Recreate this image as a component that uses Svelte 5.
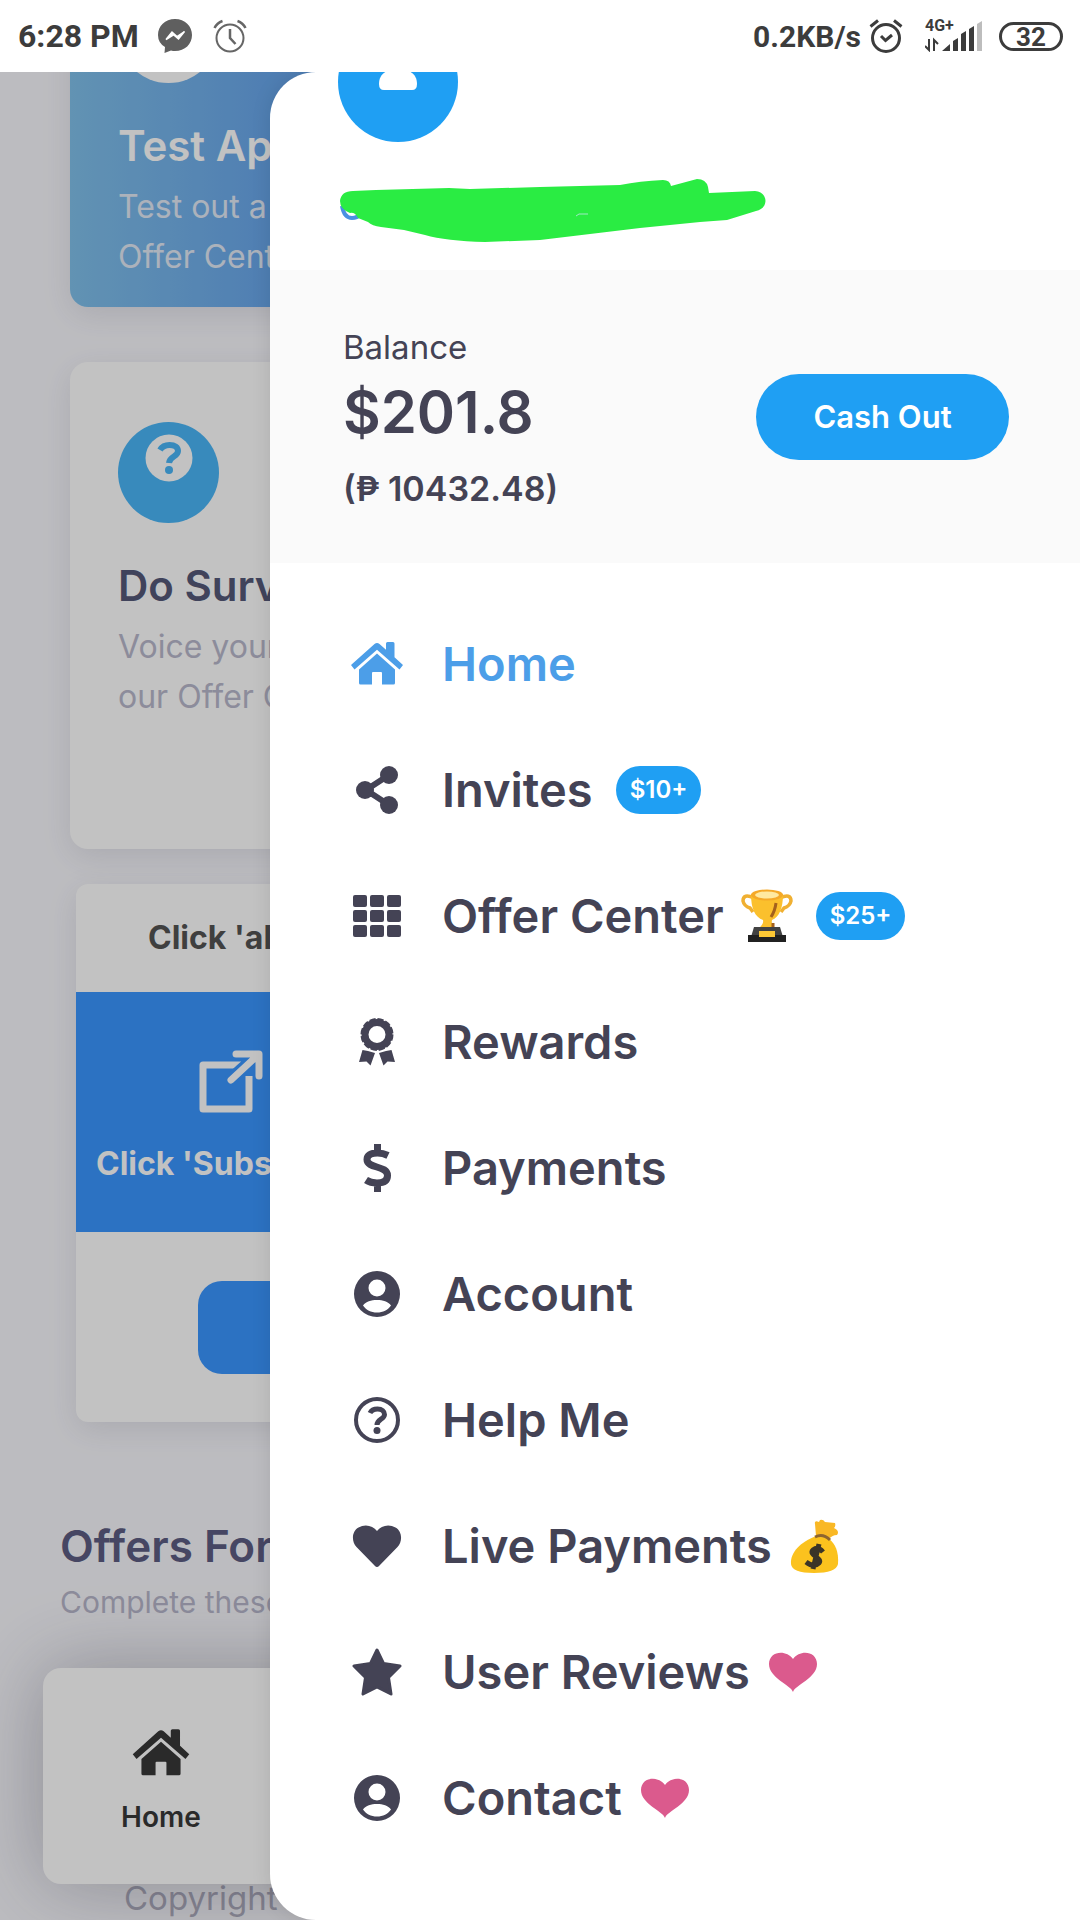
<script>
	let active = 'home';

	// Entries of the side menu, top to bottom
	const menuItems = [
		{ id: 'home', icon: 'home', title: 'Home' },
		{ id: 'invites', icon: 'share', title: 'Invites', badge: '$10+' },
		{ id: 'offers', icon: 'grid', title: 'Offer Center', emoji: 'trophy', badge: '$25+' },
		{ id: 'rewards', icon: 'award', title: 'Rewards' },
		{ id: 'payments', icon: 'dollar', title: 'Payments' },
		{ id: 'account', icon: 'user', title: 'Account' },
		{ id: 'help', icon: 'help', title: 'Help Me' },
		{ id: 'live', icon: 'heart', title: 'Live Payments', emoji: 'moneybag' },
		{ id: 'reviews', icon: 'star', title: 'User Reviews', emoji: 'heart' },
		{ id: 'contact', icon: 'user', title: 'Contact', emoji: 'heart' }
	];
</script>

{#snippet houseShape()}
	<path d="M1 25 24.500 4Q27 2 29.500 4L36 9.800V3.500Q36 2 37.500 2H43Q44.500 2 44.500 3.500V17.300L53 25 49.500 29.500 27 9.800 4.500 29.500Z" />
	<path d="M27 13.500 45 29.500V43Q45 44.500 43.500 44.500H32V33Q32 32 31 32H23Q22 32 22 33V44.500H10.500Q9 44.500 9 43V29.500Z" />
{/snippet}

{#snippet icon(name)}
	<svg class="icon" viewBox="0 0 54 48" fill="currentColor" aria-hidden="true">
		{#if name === 'home'}
			{@render houseShape()}
		{:else if name === 'share'}
			<path d="M39 9 16 24 39 39" fill="none" stroke="currentColor" stroke-width="6" />
			<circle cx="39" cy="9" r="9" />
			<circle cx="15" cy="24" r="9" />
			<circle cx="39" cy="39" r="9" />
		{:else if name === 'grid'}
			{#each [3, 18, 33] as y}
				{#each [3, 20, 37] as x}
					<rect x={x} y={y} width="14" height="12" rx="2" />
				{/each}
			{/each}
		{:else if name === 'award'}
			<circle cx="27" cy="16.500" r="12" fill="none" stroke="currentColor" stroke-width="7" />
			<circle cx="27" cy="16.500" r="15" fill="none" stroke="currentColor" stroke-width="3" stroke-dasharray="6 1.854" />
			<path d="M12.500 32 18 33 25 35 20.500 47.500 16.500 43.500 9 44ZM41.500 32 36 33 29 35 33.500 47.500 37.500 43.500 45 44Z" />
		{:else if name === 'dollar'}
			<path d="M38 11.500Q33 9 27.500 9C20.500 9 17 11.500 17 15.500C17 25 37.500 21 37.500 31.500C37.500 36.500 34 39 27 39Q20.500 39 16 36M27.500 0V9M27.500 39V48" fill="none" stroke="currentColor" stroke-width="7" />
		{:else if name === 'user'}
			<path fill-rule="evenodd" d="M27 1a23 23 0 1 0 0 46a23 23 0 1 0 0-46ZM27 9.500a8.500 8.500 0 1 1 0 17a8.500 8.500 0 1 1 0-17ZM13 35.500C16 31.500 21 30 27 30S38 31.500 41 35.500C38 40 33 42.500 27 42.500S16 40 13 35.500Z" />
		{:else if name === 'help'}
			<circle cx="27" cy="24" r="21" fill="none" stroke="currentColor" stroke-width="4" />
			<path d="M20 17Q22 13 27.500 13C32 13 34.500 15.500 34.500 18.500C34.500 23.500 27 23 27 29" fill="none" stroke="currentColor" stroke-width="5" />
			<circle cx="27" cy="34.500" r="3.500" />
		{:else if name === 'heart'}
			<path d="M27 45Q26 45 24.500 43.500L6.500 25C1 19 2 9 8.500 5.500C15 1.500 23 3.500 27 9C31 3.500 39 1.500 45.500 5.500C52 9 53 19 47.500 25L29.500 43.500Q28 45 27 45Z" />
		{:else if name === 'star'}
			<path d="M27 2 33.500 15.500 50 18 38.500 29.500 41 46 27 39 13 46 15.500 29.500 4 18 20.500 15.500Z" stroke="currentColor" stroke-width="3" stroke-linejoin="round" />
		{/if}
	</svg>
{/snippet}

{#snippet emoji(name)}
	<svg class="emoji" viewBox="0 0 52 54" aria-hidden="true">
		{#if name === 'trophy'}
			<path d="M13 9Q2 4 2 12Q3 17 9 19L12 23M39 9Q50 4 50 12Q49 17 43 19L40 23" fill="none" stroke="#f0b032" stroke-width="3.500" />
			<path d="M10 5C10 20 14 28 22 31Q23 35 18 39H34Q30 36 31 31C38 28 42 20 42 5Z" fill="#fbc02d" />
			<ellipse cx="26" cy="6" rx="16" ry="5.500" fill="#f5a928" />
			<ellipse cx="26" cy="6" rx="12" ry="3.500" fill="#ffe9a0" />
			<path d="M35 14Q34 22 30 28M32 34V38" fill="none" stroke="#a4611c" stroke-width="3" />
			<path d="M13 38H39L42 48H10Z" fill="#424242" />
			<path d="M7 46H45V53H7Z" fill="#212121" />
			<path d="M18 42H34V48H18Z" fill="#fdc835" />
		{:else if name === 'moneybag'}
			<path d="M27 17 26 5Q25 1 30 3L31 1Q34 0 36 3L46 4Q47 7 45 9Q51 12 48 16Q43 16 39 21Z" fill="#f9b825" />
			<path d="M27 17C12 23 1 33 2 45Q3 54 25 54T49 45C50 33 46 24 40 20Z" fill="#fbc21e" />
			<path d="M26 18Q34 14 41 21" fill="none" stroke="#8d6530" stroke-width="3" />
			<path d="M34 33Q29 27 24 31C19 36 34 39 30 44Q25 49 17 43M30 25 24 50" fill="none" stroke="#3b3427" stroke-width="5" />
		{:else}
			<path d="M26 47C24 40 2 33 2 19C2 6 19 4 26 14C33 4 50 6 50 19C50 33 28 40 26 47Z" fill="#db5a8d" />
		{/if}
	</svg>
{/snippet}

<div class="screen">
	<header class="status">
		<span class="clock">6:28 PM</span>
		<svg class="status-icon" viewBox="0 0 34 34" aria-hidden="true">
			<path d="M17 0C7 0 0 7 0 16Q0 24 7 28L6.500 34 13 31.500Q15 32 17 32C27 32 34 25 34 16S27 0 17 0Z" fill="#5f5f5f" />
			<path d="M8 20.500 14 13 19 17.500 26.500 12.500 20.500 20 15.500 15.800Z" fill="#fff" stroke="#fff" stroke-width="1.500" />
		</svg>
		<svg class="status-icon" viewBox="0 0 34 34" fill="none" stroke="#666" stroke-width="2" aria-hidden="true">
			<circle cx="17" cy="19" r="13.500" />
			<path d="M17 10V19L22.500 25M1.500 9Q4 4 9.500 2M32.500 9Q30 4 24.500 2" stroke-width="2.500" />
		</svg>
		<span class="spacer"></span>
		<span class="speed">0.2KB/s</span>
		<svg class="status-icon alarm" viewBox="0 0 34 34" fill="none" stroke="#3c3c3c" stroke-width="3" aria-hidden="true">
			<circle cx="17" cy="19" r="13.500" />
			<path d="M12 17 16.500 21.500 23 16M1.500 7.500 9 1.500M32.500 7.500 25 1.500" />
		</svg>
		<div class="network">
			<span>4G+</span>
			<svg viewBox="0 0 58 32" aria-hidden="true">
				<path d="M4 19V30L0 26M9 31V20L13 24" fill="none" stroke="#3c3c3c" stroke-width="2" />
				<path d="M17 31 25 24V31ZM28 21 33 18V31H28ZM36 14 41 11V31H36ZM44 9 49 6V31H44Z" fill="#3c3c3c" />
				<path d="M52 4 57 1V31H52Z" fill="#bdbdbd" />
			</svg>
		</div>
		<span class="battery">32</span>
	</header>

	<div class="stage">
		<main class="page">
			<section class="card feature">
				<div class="round"></div>
				<h2>Test Apps</h2>
				<p>Test out a new app in<br />Offer Center</p>
			</section>

			<section class="card survey">
				<div class="round">
					<svg viewBox="0 0 48 48" aria-hidden="true">
						<circle cx="24" cy="24" r="23.500" fill="#fff" />
						<path d="M15 16Q18 11 24.500 11C30 11 33 13.500 33 17C33 23 24.500 22 24 29" fill="none" stroke="#4ab6f8" stroke-width="6" />
						<circle cx="24" cy="36" r="4" fill="#4ab6f8" />
					</svg>
				</div>
				<h2>Do Surveys</h2>
				<p>Voice your opinion in<br />our Offer Center</p>
			</section>

			<section class="push">
				<h3>Click 'allow'</h3>
				<div class="push-body">
					<svg viewBox="0 0 66 64" fill="none" stroke="#fff" stroke-width="7" aria-hidden="true">
						<path d="M43 15H5V59H51V26" stroke-linejoin="round" />
						<path d="M31 31 60 5" stroke="#3a96ff" stroke-width="13" />
						<path d="M33 30 60 5M38 4H61V26" stroke-linecap="round" stroke-linejoin="round" />
					</svg>
					<strong>Click 'Subscribe'</strong>
				</div>
				<div class="push-foot">
					<button type="button" aria-label="Subscribe"></button>
				</div>
			</section>

			<section class="offers">
				<h1>Offers For You</h1>
				<p>Complete these offers</p>
			</section>

			<footer class="copyright">Copyright</footer>
		</main>

		<nav class="tabbar">
			<a class="tab" href="#home">
				<svg viewBox="0 0 54 46" fill="currentColor" aria-hidden="true">
					{@render houseShape()}
				</svg>
				<span>Home</span>
			</a>
		</nav>

		<div class="overlay"></div>

		<aside class="drawer">
			<div class="profile">
				<svg class="avatar" viewBox="0 0 120 120" aria-hidden="true">
					<circle cx="60" cy="60" r="60" fill="#1f9ff3" />
					<circle cx="60" cy="30" r="14" fill="#fff" />
					<path d="M41 62C41 51 50 47 60 47S79 51 79 62Q79 68 74 68H46Q41 68 41 62Z" fill="#fff" />
				</svg>
				<svg class="scribble" viewBox="340 178 428 66" aria-hidden="true">
					<path d="M342 206Q344 218 352 218Q357 218 361 214" fill="none" stroke="#4a90e2" stroke-width="4" />
					<path d="M340 201Q341 191 353 191L376 190 449 188 470 189 540 187 620 185Q640 181 663 180Q670 180 671 186L697 179Q706 179 708 187L709 193 755 191Q765 192 765.500 201Q765 209 756 211L727 220 700 222 640 228 540 240 485 242Q446 241 425 235L404 230 381 227Q372 226 368 222L358 218Q355 212 350 213Q340 209 340 201Z" fill="#2aec43" />
					<path d="M576 216 579 214 588 214" fill="none" stroke="#9fe9c5" stroke-width="1" />
				</svg>
			</div>

			<section class="balance">
				<div class="amounts">
					<span class="label">Balance</span>
					<strong>$201.8</strong>
					<span class="local">(₱ 10432.48)</span>
				</div>
				<button type="button" class="cashout">Cash Out</button>
			</section>

			<nav class="menu">
				{#each menuItems as item}
					<a class="menu-item" class:active={active === item.id} href="#{item.id}">
						{@render icon(item.icon)}
						<span>{item.title}</span>
						{#if item.emoji}
							{@render emoji(item.emoji)}
						{/if}
						{#if item.badge}
							<span class="badge">{item.badge}</span>
						{/if}
					</a>
				{/each}
			</nav>
		</aside>
	</div>
</div>

<style>
	:global(body) {
		margin: 0;
		background: #fff;
	}

	.screen {
		display: flex;
		flex-direction: column;
		height: 100vh;
		overflow: hidden;
		font-family: Inter, Roboto, sans-serif;
		color: #444355;
	}

	h1, h2, h3, p {
		margin: 0;
	}

	a {
		color: inherit;
		text-decoration: none;
	}

	button {
		border: 0;
		font-family: inherit;
		cursor: pointer;
	}

	svg {
		display: block;
		flex-shrink: 0;
	}

	/* Status bar */
	.status {
		display: flex;
		align-items: center;
		flex-shrink: 0;
		box-sizing: border-box;
		height: 72px;
		padding: 0 17px 0 18px;
		font-family: Roboto, sans-serif;
		font-weight: 700;
		color: #3c3c3c;
	}

	.clock {
		font-size: 32px;
		margin-right: 19px;
	}

	.status-icon {
		width: 34px;
		height: 34px;
		margin-right: 21px;
	}

	.status-icon.alarm {
		margin: 0 22px 0 8px;
	}

	.spacer {
		flex: 1;
	}

	.speed {
		font-size: 30px;
	}

	.network {
		position: relative;
		width: 58px;
		margin-right: 16px;
	}

	.network svg {
		width: 58px;
		height: 32px;
	}

	.network span {
		position: absolute;
		left: 0;
		top: 0;
		font-size: 16px;
		line-height: 12px;
	}

	.battery {
		box-sizing: border-box;
		width: 64px;
		height: 29px;
		border: 3px solid #3c3c3c;
		border-radius: 15px;
		font-size: 26px;
		line-height: 24px;
		text-align: center;
	}

	/* Page behind the drawer, scrolled to its end */
	.stage {
		position: relative;
		flex: 1;
		min-height: 0;
		overflow: hidden;
		background: #f8f8fd;
	}

	.page {
		display: flex;
		flex-direction: column;
		justify-content: flex-end;
		box-sizing: border-box;
		height: 100%;
		padding: 0 70px 2px;
	}

	.page > * {
		flex-shrink: 0;
	}

	.card {
		padding: 60px 48px 25px;
		border-radius: 18px;
		box-shadow: 0 8px 30px rgba(60, 60, 80, 0.12);
		background: #fff;
	}

	.card h2 {
		margin: 38px 0 11px;
		font-size: 42px;
		font-weight: 600;
		line-height: 50px;
		color: #555878;
	}

	.card p {
		font-size: 32px;
		line-height: 50px;
		color: #b9b8cc;
	}

	.round {
		display: flex;
		justify-content: center;
		box-sizing: border-box;
		width: 101px;
		height: 101px;
		padding-top: 12px;
		border-radius: 50%;
		background: #4ab6f8;
	}

	.round svg {
		width: 48px;
		height: 48px;
	}

	.feature {
		background: linear-gradient(90deg, #81c1ec, #68a6ec 22%, #5f9cf0);
	}

	.feature .round {
		background: #fff;
	}

	.feature h2 {
		color: #fff;
	}

	.feature p {
		color: #e2eaf6;
	}

	.survey {
		margin-top: 55px;
		padding-bottom: 127px;
	}

	.push {
		margin: 35px 6px 0;
		border-radius: 12px;
		background: #fff;
		box-shadow: 0 8px 30px rgba(60, 60, 80, 0.12);
	}

	.push h3 {
		padding: 0 72px;
		font-size: 32px;
		font-weight: 700;
		line-height: 108px;
		color: #545454;
	}

	.push-body {
		box-sizing: border-box;
		height: 240px;
		padding: 58px 20px 0;
		background: #3a96ff;
	}

	.push-body svg {
		width: 66px;
		height: 64px;
		margin: 0 0 32px 102px;
	}

	.push-body strong {
		font-size: 32px;
		line-height: 36px;
		color: #fff;
	}

	.push-foot {
		padding: 49px 122px 48px;
	}

	.push-foot button {
		display: block;
		width: 100%;
		height: 93px;
		border-radius: 24px;
		background: #3a96ff;
	}

	.offers {
		margin: 99px -10px 256px;
	}

	.offers h1 {
		margin-bottom: 11px;
		font-size: 44px;
		font-weight: 600;
		line-height: 50px;
		color: #5d5d82;
	}

	.offers p {
		font-size: 30px;
		line-height: 40px;
		color: #b9b8cc;
	}

	.copyright {
		padding-left: 54px;
		font-size: 33px;
		line-height: 40px;
		color: #b0afc0;
	}

	.tabbar {
		position: absolute;
		left: 43px;
		right: 43px;
		bottom: 36px;
		display: flex;
		box-sizing: border-box;
		height: 216px;
		padding: 59px 78px 0;
		border-radius: 18px;
		background: #fff;
		box-shadow: 0 0 80px rgba(40, 40, 60, 0.3);
	}

	.tab {
		display: flex;
		flex-direction: column;
		align-items: center;
		gap: 24px;
		font-size: 28px;
		font-weight: 600;
		line-height: 32px;
		color: #383838;
	}

	.tab svg {
		width: 60px;
		height: 50px;
	}

	.overlay {
		position: absolute;
		inset: 0;
		background: rgba(0, 0, 0, 0.24);
	}

	/* Side menu */
	.drawer {
		position: absolute;
		top: 0;
		right: 0;
		bottom: 0;
		left: 25%;
		display: flex;
		flex-direction: column;
		justify-content: flex-end;
		box-sizing: border-box;
		padding-bottom: 59px;
		overflow: hidden;
		border-radius: 46px 0 0 46px;
		background: #fff;
		box-shadow: 0 0 20px rgba(0, 0, 0, 0.1);
	}

	.drawer > * {
		flex-shrink: 0;
	}

	.profile {
		padding: 0 68px 26px;
	}

	.avatar {
		width: 120px;
		height: 120px;
	}

	.scribble {
		width: 428px;
		height: 66px;
		margin: 36px 0 0 2px;
	}

	.balance {
		display: flex;
		align-items: center;
		justify-content: space-between;
		box-sizing: border-box;
		height: 293px;
		padding: 0 71px 0 73px;
		background: #fafafa;
	}

	.amounts {
		display: flex;
		flex-direction: column;
		padding-top: 4px;
	}

	.label {
		font-size: 33px;
		line-height: 40px;
	}

	.amounts strong {
		margin: 10px 0 20px;
		font-size: 58px;
		font-weight: 600;
		line-height: 70px;
	}

	.local {
		font-size: 34px;
		font-weight: 600;
		line-height: 44px;
	}

	.cashout {
		width: 253px;
		height: 86px;
		padding: 0;
		border-radius: 43px;
		background: #1f9ff3;
		font-size: 31px;
		font-weight: 600;
		color: #fff;
	}

	.menu {
		padding: 38px 0 0 80px;
	}

	.menu-item {
		display: flex;
		align-items: center;
		height: 126px;
		font-size: 47px;
		font-weight: 600;
		line-height: 56px;
	}

	.menu-item.active {
		color: #4c9ee8;
	}

	.icon {
		width: 54px;
		height: 48px;
		margin-right: 38px;
	}

	.emoji {
		width: 52px;
		height: 54px;
		margin-left: 17px;
	}

	.badge {
		margin-left: 23px;
		padding: 0 14px;
		border-radius: 24px;
		background: #1f9ff3;
		font-size: 24px;
		line-height: 48px;
		color: #fff;
	}
</style>
